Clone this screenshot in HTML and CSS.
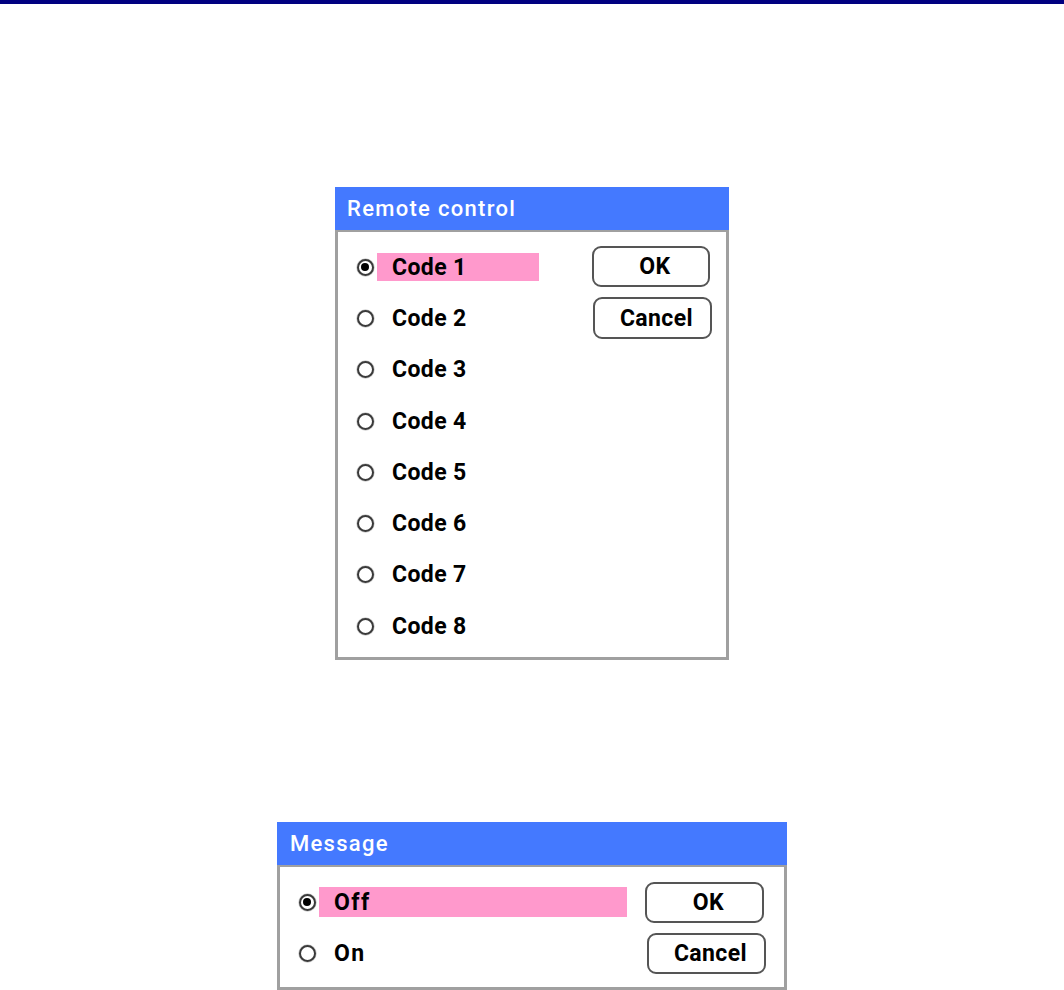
FILE: index.html
```html
<!DOCTYPE html>
<html>
<head>
<meta charset="utf-8">
<link rel="stylesheet" href="styles.css">
</head>
<body>
<div class="topbar"></div>
<div class="page">
  <div class="dialog d1">
    <div class="title">Remote control</div>
    <div class="body">
      <div class="options">
        <div class="opt"><span class="radio on"></span><span class="label sel">Code 1</span></div>
        <div class="opt"><span class="radio"></span><span class="label">Code 2</span></div>
        <div class="opt"><span class="radio"></span><span class="label">Code 3</span></div>
        <div class="opt"><span class="radio"></span><span class="label">Code 4</span></div>
        <div class="opt"><span class="radio"></span><span class="label">Code 5</span></div>
        <div class="opt"><span class="radio"></span><span class="label">Code 6</span></div>
        <div class="opt"><span class="radio"></span><span class="label">Code 7</span></div>
        <div class="opt"><span class="radio"></span><span class="label">Code 8</span></div>
      </div>
      <div class="buttons">
        <div class="btn">OK</div>
        <div class="btn">Cancel</div>
      </div>
    </div>
  </div>
  <div class="dialog d2">
    <div class="title">Message</div>
    <div class="body">
      <div class="options">
        <div class="opt"><span class="radio on"></span><span class="label sel">Off</span></div>
        <div class="opt"><span class="radio"></span><span class="label">On</span></div>
      </div>
      <div class="buttons">
        <div class="btn">OK</div>
        <div class="btn">Cancel</div>
      </div>
    </div>
  </div>
</div>
</body>
</html>
```

FILE: styles.css
```css
html, body {
  margin: 0;
  padding: 0;
  background: #fff;
  height: 990px;
  overflow: hidden;
}
body {
  font-family: Roboto, "Liberation Sans", sans-serif;
  color: #000;
}
.topbar {
  height: 4px;
  background: #000080;
}
.page {
  display: flex;
  flex-direction: column;
  align-items: center;
}
.dialog {
  display: flex;
  flex-direction: column;
}
.d1 {
  width: 394px;
  margin-top: 183px;
}
.d2 {
  width: 510px;
  margin-top: 162px;
}
.title {
  height: 43px;
  background: #4479ff;
  color: #fff;
  font-size: 22px;
  font-weight: 500;
  letter-spacing: 1.3px;
  padding-left: 12px;
  display: flex;
  align-items: center;
  box-sizing: border-box;
}
.d2 .title {
  padding-left: 13px;
}
.body {
  border: 3px solid #a0a0a0;
  border-top-width: 2px;
  background: #fff;
  display: flex;
  justify-content: space-between;
  align-items: flex-start;
}
.options {
  padding: 9.5px 0 5.5px 18.5px;
  display: flex;
  flex-direction: column;
}
.d2 .options {
  padding-bottom: 8.5px;
}
.opt {
  height: 51.3px;
  display: flex;
  align-items: center;
}
.d2 .opt {
  height: 51px;
}
.radio {
  width: 17px;
  height: 17px;
  box-sizing: border-box;
  border: 2px solid #3a3a3a;
  border-radius: 50%;
  background: #fff;
  box-shadow: 0 0 0 0.7px rgba(0,0,0,0.2);
  margin-right: 3.5px;
  display: flex;
  align-items: center;
  justify-content: center;
  flex: none;
}
.radio.on::after {
  content: "";
  width: 8px;
  height: 8px;
  border-radius: 50%;
  background: #000;
}
.label {
  width: 162px;
  height: 28px;
  padding-left: 15px;
  box-sizing: border-box;
  display: flex;
  align-items: center;
  font-size: 23px;
  font-weight: 700;
  letter-spacing: 0.4px;
}
.d2 .label {
  width: 308px;
  height: 30px;
  letter-spacing: 1.5px;
}
.label.sel {
  background: #ff99cc;
}
.buttons {
  display: flex;
  flex-direction: column;
  align-items: flex-end;
  gap: 10px;
  padding: 14px 14px 0 0;
}
.d2 .buttons {
  padding: 15px 18px 0 0;
}
.btn {
  width: 118px;
  height: 41px;
  box-sizing: border-box;
  border: 2px solid #555;
  border-radius: 9px;
  display: flex;
  align-items: center;
  justify-content: center;
  padding-left: 8px;
  font-size: 23px;
  font-weight: 700;
  letter-spacing: 0.4px;
  margin-right: 2px;
}
.btn + .btn {
  width: 119px;
  height: 42px;
  margin-right: 0;
}
.d2 .btn {
  width: 119px;
  height: 41px;
}
```
